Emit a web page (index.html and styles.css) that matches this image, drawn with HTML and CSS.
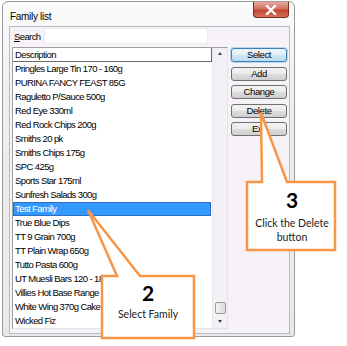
FILE: index.html
```html
<!DOCTYPE html>
<html>
<head>
    <meta charset="UTF-8">
    <title>Family list</title>
    <link rel="stylesheet" href="styles.css">
</head>
<body>
    <div class="screen">
        <div class="window">
            <div class="titlebar">
                <span class="title">Family list</span>
                <div class="close">
                    <svg width="14" height="10" viewBox="0 0 14 10">
                        <path d="M3 1 L11 9 M11 1 L3 9" stroke="#fff" stroke-width="2.4" stroke-linecap="square"/>
                    </svg>
                </div>
            </div>
            <div class="client">
                <div class="search-row">
                    <span class="search-label"><u>S</u>earch</span>
                    <div class="search-input"></div>
                </div>
                <div class="body-row">
                    <div class="listbox">
                        <div class="list-main">
                            <div class="list-header">Description</div>
                            <div class="row">Pringles Large Tin 170 - 160g</div>
                            <div class="row">PURINA FANCY FEAST 85G</div>
                            <div class="row">Raguletto P/Sauce 500g</div>
                            <div class="row">Red Eye 330ml</div>
                            <div class="row">Red Rock Chips 200g</div>
                            <div class="row">Smiths 20 pk</div>
                            <div class="row">Smiths Chips 175g</div>
                            <div class="row">SPC 425g</div>
                            <div class="row">Sports Star 175ml</div>
                            <div class="row">Sunfresh Salads 300g</div>
                            <div class="row selected">Test Family</div>
                            <div class="row">True Blue Dips</div>
                            <div class="row">TT 9 Grain 700g</div>
                            <div class="row">TT Plain Wrap 650g</div>
                            <div class="row">Tutto Pasta 600g</div>
                            <div class="row">UT Muesli Bars 120 - 180g</div>
                            <div class="row">Villies Hot Base Range</div>
                            <div class="row">White Wing 370g Cake Mix</div>
                            <div class="row">Wicked Fiz</div>
                        </div>
                        <div class="scrollbar">
                            <span class="arrow up"></span>
                            <span class="track"></span>
                            <span class="thumb"></span>
                            <span class="arrow down"></span>
                        </div>
                    </div>
                    <div class="buttons">
                        <button class="btn default">Select</button>
                        <button class="btn">Add</button>
                        <button class="btn">Change</button>
                        <button class="btn">Delete</button>
                        <button class="btn">Exit</button>
                    </div>
                </div>
            </div>
        </div>

        <svg class="callouts" width="347" height="346" viewBox="0 0 347 346">
            <polygon points="247,182 262,182 261,113 287,182 335,182 335,250 247,250" fill="#fff" stroke="#f79646" stroke-width="2.5" stroke-linejoin="miter"/>
            <polygon points="102,276 117,276 88,210 140,276 194,276 194,338 102,338" fill="#fff" stroke="#f79646" stroke-width="2.5" stroke-linejoin="miter"/>
        </svg>
        <div class="note note3">
            <div class="note-num">3</div>
            <div class="note-text">Click the Delete<br>button</div>
        </div>
        <div class="note note2">
            <div class="note-num">2</div>
            <div class="note-text">Select Family</div>
        </div>
    </div>
</body>
</html>
```

FILE: styles.css
```css
html, body {
    margin: 0;
    padding: 0;
    background: #fff;
}
.screen {
    position: relative;
    width: 347px;
    height: 346px;
    overflow: hidden;
    padding: 1px 0 0 2px;
    box-sizing: border-box;
    font-family: "Liberation Sans", Arial, sans-serif;
    font-size: 9.5px;
    letter-spacing: -0.6px;
    color: #000;
}

.window {
    width: 293px;
    height: 336px;
    box-sizing: border-box;
    border: 1px solid #9a9a9a;
    border-radius: 6px 6px 3px 3px;
    background: linear-gradient(180deg, #fbfbfb 0%, #eeeeee 30%, #e9e9ec 100%);
    padding: 0 4px 3px 6px;
    display: flex;
    flex-direction: column;
}
.titlebar {
    height: 24px;
    display: flex;
    align-items: flex-start;
    justify-content: space-between;
    flex-shrink: 0;
}
.title {
    font-size: 10px;
    letter-spacing: -0.3px;
    margin: 9px 0 0 1px;
}
.close {
    width: 36px;
    height: 16px;
    margin: 0 1px 0 0;
    box-sizing: border-box;
    border: 1px solid #7a2a22;
    border-top: none;
    border-radius: 0 0 4px 4px;
    background: linear-gradient(180deg, #e9a99c 0%, #d3715f 45%, #c24530 55%, #d6725c 100%);
    display: flex;
    align-items: center;
    justify-content: center;
}

.client {
    flex: 1;
    background: #f6f2f8;
    border: 1px solid #b9b9c0;
    display: flex;
    flex-direction: column;
    padding: 1px 2px 4px 1px;
}
.search-row {
    display: flex;
    align-items: center;
    height: 16px;
}
.search-label {
    width: 33px;
    padding-left: 3px;
    box-sizing: border-box;
}
.search-input {
    width: 164px;
    height: 16px;
    box-sizing: border-box;
    background: #fff;
    border: 1px solid #eceaf0;
}

.body-row {
    display: flex;
    margin-top: 3px;
    flex: 1;
}
.listbox {
    width: 216px;
    height: 282px;
    margin-left: 1px;
    box-sizing: border-box;
    border: 1px solid #a0a0a0;
    border-right-color: #e4e4e4;
    border-bottom-color: #e4e4e4;
    background: #fff;
    display: flex;
}
.list-main {
    flex: 1;
    overflow: hidden;
}
.list-header {
    height: 14px;
    line-height: 13px;
    box-sizing: border-box;
    padding-left: 2px;
    border-bottom: 1px solid #6b6b6b;
    border-right: 1px solid #6b6b6b;
    background: #fff;
}
.row {
    height: 14px;
    line-height: 14px;
    padding-left: 2px;
    white-space: nowrap;
}
.row.selected {
    background: #3399ff;
    color: #fff;
    box-shadow: inset 0 0 0 1px #2a6fc0;
    margin-right: 1px;
}

.scrollbar {
    width: 14px;
    background: #f4f1f6;
    border-left: 1px solid #e8e6ea;
    display: flex;
    flex-direction: column;
    align-items: center;
}
.arrow {
    width: 0;
    height: 0;
    border-left: 2.5px solid transparent;
    border-right: 2.5px solid transparent;
}
.arrow.up {
    margin-top: 4px;
    border-bottom: 3px solid #404040;
}
.track {
    flex: 1;
}
.thumb {
    width: 11px;
    height: 12px;
    box-sizing: border-box;
    border: 1px solid #9a9a9a;
    border-radius: 2px;
    background: linear-gradient(90deg, #f4f4f4, #dcdcdc);
}
.arrow.down {
    margin: 6px 0 5px;
    border-top: 3px solid #404040;
}

.buttons {
    display: flex;
    flex-direction: column;
    gap: 4.5px;
    margin-left: 3px;
    padding-top: 1px;
}
.btn {
    width: 56px;
    height: 14px;
    padding: 0;
    box-sizing: border-box;
    font-family: "Liberation Sans", Arial, sans-serif;
    font-size: 9.5px;
    letter-spacing: -0.4px;
    line-height: 12px;
    color: #000;
    border: 1px solid #707070;
    border-radius: 3px;
    background: linear-gradient(180deg, #f2f2f2 0%, #ebebeb 50%, #dddddd 51%, #cfcfcf 100%);
}
.btn.default {
    border-color: #3c7fb1;
    box-shadow: 0 0 0 1px #b8d8ef;
    background: linear-gradient(180deg, #f0f7fc 0%, #e0eef9 50%, #cfe6f6 51%, #bcdcf3 100%);
}

.callouts {
    position: absolute;
    left: 0;
    top: 0;
}
.note {
    position: absolute;
    font-family: Lato, "Open Sans", sans-serif;
    letter-spacing: 0;
    text-align: center;
    color: #222;
}
.note-num {
    font-weight: bold;
    font-size: 21px;
    line-height: 22px;
    color: #000;
}
.note-text {
    font-size: 10.5px;
    line-height: 14px;
}
.note3 {
    left: 247px;
    top: 189px;
    width: 90px;
}
.note3 .note-text {
    margin-top: 5px;
}
.note2 {
    left: 102px;
    top: 282px;
    width: 92px;
}
.note2 .note-text {
    margin-top: 3px;
}
```
